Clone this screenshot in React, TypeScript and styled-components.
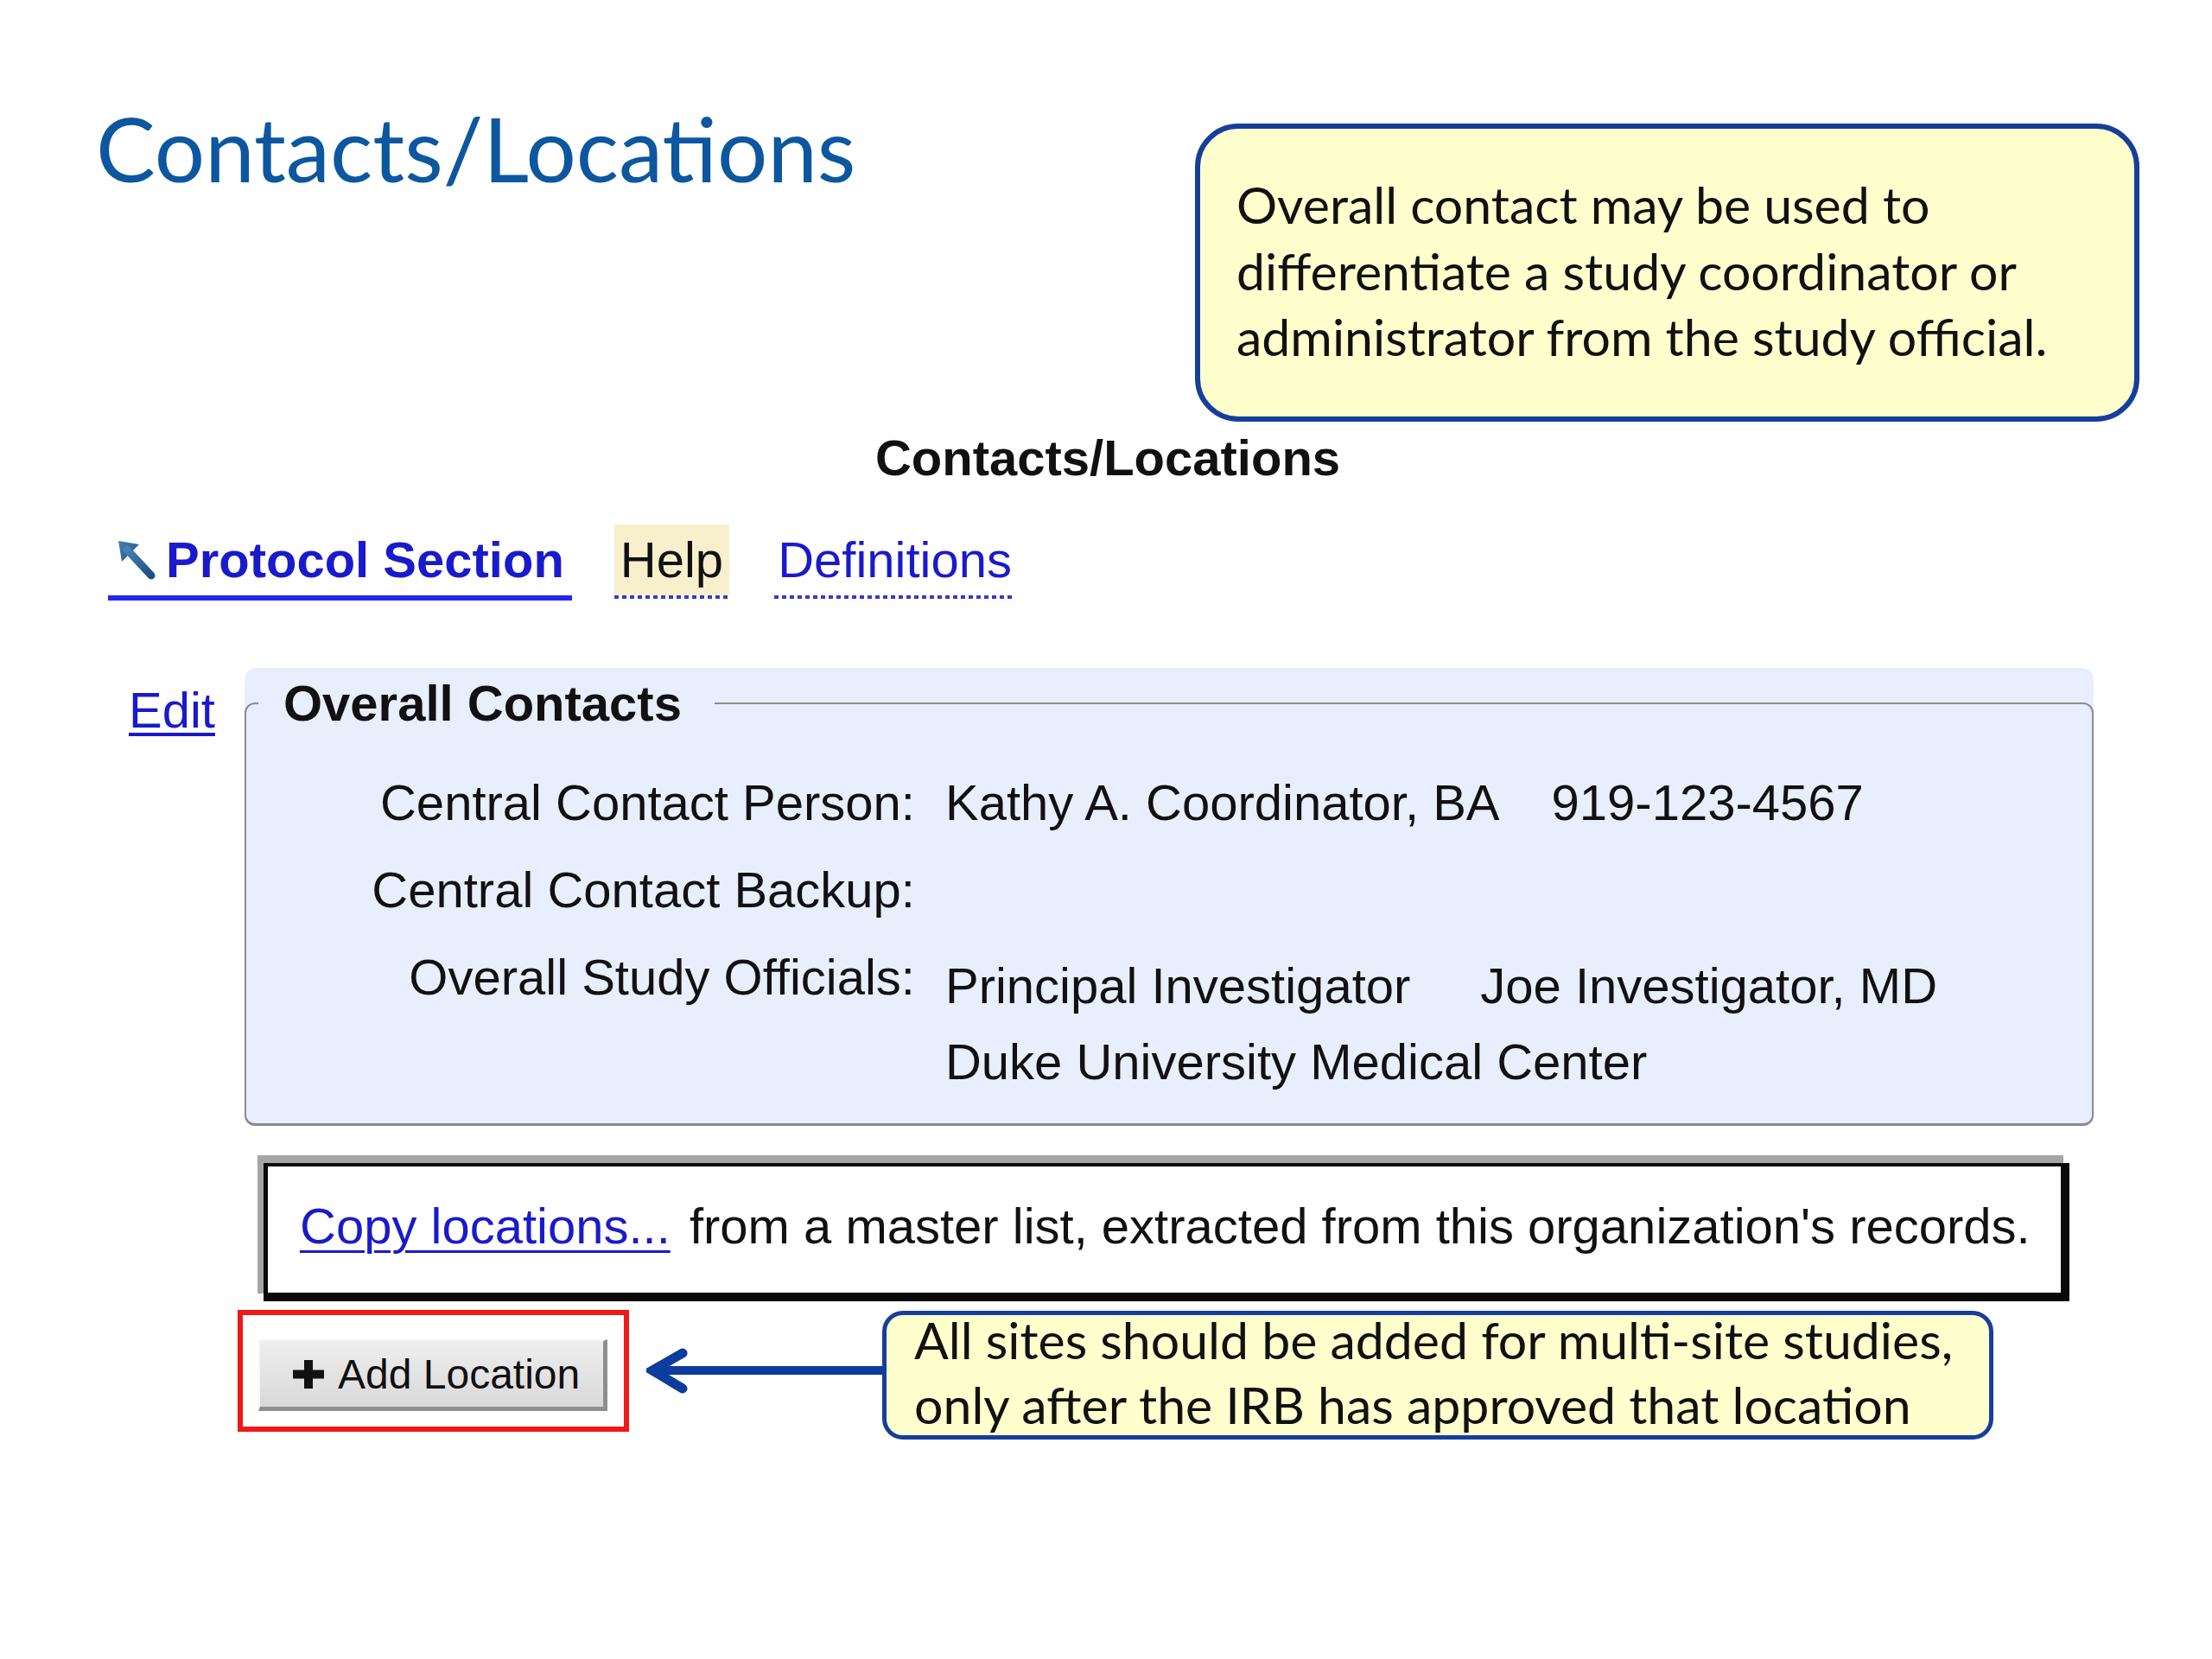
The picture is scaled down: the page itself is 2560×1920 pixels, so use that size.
import React from 'react';
import styled, { createGlobalStyle } from 'styled-components';

const GlobalStyle = createGlobalStyle`
  html, body {
    margin: 0;
    padding: 0;
    background: #ffffff;
  }
`;

const web = `'Liberation Sans', Arial, sans-serif`;
const slideFont = `Lato, 'Open Sans', sans-serif`;

// square dotted rule, drawn as a repeating background along the bottom edge
const dots = `linear-gradient(to right, #3a3ac2 55%, transparent 55%) left bottom / 9px 4px repeat-x`;

const Slide = styled.div`
  width: 2560px;
  height: 1920px;
  overflow: hidden;
  box-sizing: border-box;
  padding-top: 119px;
  background: #ffffff;
`;

const TopRow = styled.div`
  display: flex;
  justify-content: space-between;
  align-items: flex-start;
  padding: 0 84px 0 111px;
`;

const Title = styled.h1`
  margin: 0;
  font-family: ${slideFont};
  font-weight: 400;
  font-size: 103px;
  line-height: 104px;
  color: #0d57a0;
`;

const Note = styled.div<{ $radius: number; $border: number }>`
  box-sizing: border-box;
  background: #ffffcd;
  border: ${(p) => p.$border}px solid #163e9b;
  border-radius: ${(p) => p.$radius}px;
  font-family: ${slideFont};
  font-size: 59px;
  color: #111111;
`;

const TopNote = styled(Note)`
  margin-top: 24px;
  width: 1093px;
  height: 345px;
  padding: 50px 0 0 42px;
  line-height: 76.5px;
`;

const Page = styled.div`
  margin-left: 125px;
  width: 2314px;
  font-family: ${web};
  font-size: 58px;
  color: #111111;
`;

const PageHeading = styled.h2`
  margin: 7px 0 0;
  text-align: center;
  font-size: 58px;
  line-height: 70px;
  font-weight: 700;
`;

const Tabs = styled.div`
  display: flex;
  align-items: flex-start;
  margin-top: 42px;
`;

const Tab = styled.a<{ $kind: 'current' | 'help' | 'link' }>`
  display: flex;
  align-items: center;
  gap: 11px;
  line-height: 82px;
  text-decoration: none;
  color: ${(p) => (p.$kind === 'help' ? '#111111' : '#1a1acc')};
  font-weight: ${(p) => (p.$kind === 'current' ? 700 : 400)};
  border-bottom: ${(p) => (p.$kind === 'current' ? '6px solid #2626f2' : 'none')};
  padding: ${(p) =>
    p.$kind === 'current' ? '0 9px 0 10px' : p.$kind === 'help' ? '0 7px 4px' : '0 4px 4px'};
  margin-left: ${(p) => (p.$kind === 'help' ? 49 : p.$kind === 'link' ? 52 : 0)}px;
  background: ${(p) =>
    p.$kind === 'help'
      ? `${dots}, linear-gradient(#f8efcd, #f8efcd) left top / 100% 82px no-repeat`
      : p.$kind === 'link'
        ? dots
        : 'none'};
`;

const PanelRow = styled.div`
  display: flex;
  align-items: flex-start;
  gap: 34px;
  margin-top: 78px;
  padding-left: 24px;
`;

const EditLink = styled.a`
  margin-top: 8px;
  line-height: 82px;
  color: #1a1acc;
  text-decoration: underline;
  text-decoration-thickness: 4px;
  text-underline-offset: 6px;
`;

const Panel = styled.div`
  width: 2140px;
  background: #e8eefc;
  border-radius: 14px;
`;

const Fieldset = styled.fieldset`
  margin: 0;
  padding: 0 0 27px;
  border: 2px solid #8c8c8c;
  border-bottom-width: 3px;
  border-radius: 12px;
`;

const Legend = styled.legend`
  margin-left: 14px;
  padding: 0 38px 0 29px;
  font-weight: 700;
  line-height: 82px;
`;

const Rows = styled.div`
  display: grid;
  grid-template-columns: 774px 1fr;
  column-gap: 35px;
  row-gap: 19px;
  margin-top: 33px;
  line-height: 82px;
`;

const Label = styled.div`
  text-align: right;
  white-space: nowrap;
`;

const Value = styled.div<{ $stack?: boolean }>`
  white-space: nowrap;
  padding-top: ${(p) => (p.$stack ? 7 : 0)}px;
  line-height: ${(p) => (p.$stack ? 88 : 82)}px;
`;

const Gap = styled.span<{ $w: number }>`
  margin-left: ${(p) => p.$w}px;
`;

const CopyBox = styled.div`
  margin: 43px 0 0 180px;
  width: 2090px;
  box-sizing: border-box;
  background: #ffffff;
  border-style: solid;
  border-color: #0a0a0a;
  border-width: 4px 10px 10px 5px;
  box-shadow: -7px -9px 0 0 #a6a6a6;
  padding: 28px 0 36px 37px;
  line-height: 82px;
  white-space: nowrap;
`;

const CopyLink = styled.a`
  color: #1a1acc;
  text-decoration: underline;
  text-decoration-thickness: 3px;
  text-underline-offset: 8px;
  margin-right: 6px;
`;

const BottomRow = styled.div`
  display: flex;
  align-items: flex-start;
  margin: 10px 0 0 150px;
`;

const Highlight = styled.div`
  border: 6px solid #f01818;
  padding: 28px 19px 18px 18px;
`;

const AddButton = styled.button`
  box-sizing: border-box;
  width: 404px;
  height: 83px;
  display: flex;
  align-items: center;
  gap: 16px;
  padding: 0 0 0 38px;
  background: linear-gradient(#eeeeee, #d9d9d9);
  border-style: solid;
  border-width: 2px 5px 5px 2px;
  border-color: #f6f6f6 #8e8e8e #8e8e8e #f6f6f6;
  font-family: ${web};
  font-size: 48px;
  color: #111111;
  cursor: pointer;
`;

const Pointer = styled.svg`
  margin: 40px 0 0 20px;
  flex: none;
`;

const BottomNote = styled(Note)`
  margin-top: 1px;
  width: 1286px;
  height: 149px;
  padding-left: 32px;
  line-height: 75px;
`;

const NoteText = styled.div<{ $lift?: number }>`
  margin-top: ${(p) => -(p.$lift || 0)}px;
  white-space: nowrap;
`;

const SectionArrow = () => (
  <svg width="46" height="48" viewBox="0 0 46 48">
    <defs>
      <linearGradient id="arr" x1="0" y1="0" x2="1" y2="1">
        <stop offset="0" stopColor="#4a7fb6" />
        <stop offset="1" stopColor="#1d4f84" />
      </linearGradient>
    </defs>
    <polygon points="2,2 26,6 6,26" fill="url(#arr)" />
    <line x1="12" y1="12" x2="40" y2="42" stroke="url(#arr)" strokeWidth="9" strokeLinecap="round" />
  </svg>
);

const PlusIcon = () => (
  <svg width="36" height="33" viewBox="0 0 36 33">
    <rect x="13" y="0" width="10" height="33" fill="#111" />
    <rect x="0" y="11.5" width="36" height="10" fill="#111" />
  </svg>
);

const App: React.FC = () => {
  return (
    <>
      <GlobalStyle />
      <Slide>
        <TopRow>
          <Title>Contacts/Locations</Title>
          <TopNote $radius={50} $border={6}>
            <NoteText>
              Overall contact may be used to
              <br />
              differentiate a study coordinator or
              <br />
              administrator from the study official.
            </NoteText>
          </TopNote>
        </TopRow>

        <Page>
          <PageHeading>Contacts/Locations</PageHeading>

          <Tabs>
            <Tab $kind="current">
              <SectionArrow />
              Protocol Section
            </Tab>
            <Tab $kind="help">Help</Tab>
            <Tab $kind="link">Definitions</Tab>
          </Tabs>

          <PanelRow>
            <EditLink>Edit</EditLink>
            <Panel>
              <Fieldset>
                <Legend>Overall Contacts</Legend>
                <Rows>
                  <Label>Central Contact Person:</Label>
                  <Value>
                    Kathy A. Coordinator, BA<Gap $w={60}>919-123-4567</Gap>
                  </Value>
                  <Label>Central Contact Backup:</Label>
                  <Value />
                  <Label>Overall Study Officials:</Label>
                  <Value $stack>
                    Principal Investigator<Gap $w={81}>Joe Investigator, MD</Gap>
                    <br />
                    Duke University Medical Center
                  </Value>
                </Rows>
              </Fieldset>
            </Panel>
          </PanelRow>

          <CopyBox>
            <CopyLink>Copy locations...</CopyLink> from a master list, extracted from this
            organization's records.
          </CopyBox>

          <BottomRow>
            <Highlight>
              <AddButton>
                <PlusIcon />
                Add Location
              </AddButton>
            </Highlight>
            <Pointer width="273" height="62" viewBox="0 0 273 62">
              <line x1="8" y1="30" x2="273" y2="30" stroke="#0c3c9c" strokeWidth="10" />
              <polyline
                points="42,10 7,30 42,51"
                fill="none"
                stroke="#0c3c9c"
                strokeWidth="11"
                strokeLinecap="round"
                strokeLinejoin="miter"
              />
            </Pointer>
            <BottomNote $radius={24} $border={5}>
              <NoteText $lift={9}>
                All sites should be added for multi-site studies,
                <br />
                only after the IRB has approved that location
              </NoteText>
            </BottomNote>
          </BottomRow>
        </Page>
      </Slide>
    </>
  );
};

export default App;
